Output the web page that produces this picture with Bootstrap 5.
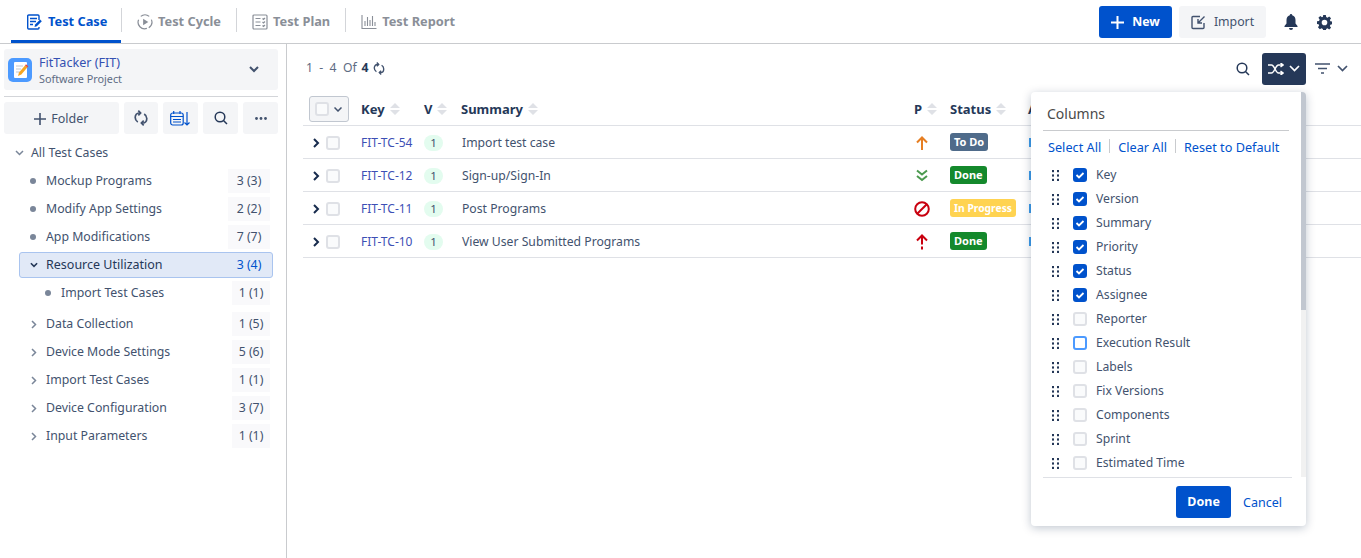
<!DOCTYPE html>
<html lang="en">
<head>
  <meta charset="UTF-8" />
  <meta name="viewport" content="width=device-width, initial-scale=1.0" />
  <title>Test Case</title>
  <link href="https://cdn.jsdelivr.net/npm/bootstrap@5.3.0/dist/css/bootstrap.min.css" rel="stylesheet">
  <style>
    html, body { height: 100%; overflow: hidden; }
    body { font-family: "Noto Sans", "Open Sans", sans-serif; font-size: 12.3px; color: #42526e; background: #fff; }
    svg { display: block; flex: none; }

    .top-bar { height: 44px; border-bottom: 1px solid #c9cbce; padding-left: 11px; padding-right: 29px; }
    .tab-item { height: 43px; padding: 0 15px; gap: 5px; font-weight: 700; font-size: 12.8px; color: #8a8f98; white-space: nowrap; }
    .tab-item.active { color: #0052cc; border-bottom: 3px solid #0052cc; padding: 3px 0 0 16px; width: 110px; gap: 6px; }
    .tab-sep { width: 1px; height: 24px; background: #d3d5d9; margin-top: -4px; }
    .btn-new { width: 73px; height: 32px; background: #0052cc; color: #fff; font-weight: 700; font-size: 12.3px; border-radius: 3px; gap: 8px; }
    .btn-import { width: 87px; height: 32px; background: #f4f5f7; color: #42526e; font-size: 12.3px; border-radius: 3px; gap: 8px; margin-left: 7px; }
    .bell-icon { margin-left: 18px; }
    .gear-icon { margin-left: 19px; }

    .page-body { height: 514px; }
    .side-panel { width: 287px; flex: none; border-right: 1px solid #c9cbce; padding: 5px 8px 0 4px; }
    .project-box { height: 41px; background: #f4f5f7; border-radius: 3px; padding: 0 19px 0 4px; gap: 7px; }
    .project-logo { width: 24px; height: 24px; border-radius: 5px; background: #4c9aff; }
    .project-text { padding-top: 2px; }
    .project-name { color: #3451b2; font-size: 12.6px; line-height: 17px; }
    .project-type { color: #5e6c84; font-size: 10.8px; line-height: 16px; }
    .side-rule { border-top: 1px solid #d3d5d9; margin: 6px 0 5px; }
    .tool-row { gap: 5px; }
    .tool-btn { height: 32px; width: 35px; background: #f4f5f7; border-radius: 3px; color: #42526e; }
    .folder-btn { width: 115px; gap: 5px; font-size: 12.5px; padding-top: 2px; }
    .tree-row { height: 28px; color: #42526e; font-size: 12.3px; }
    .tree-row .tree-label { flex: 1; }
    .tree-dot { width: 6px; height: 6px; border-radius: 50%; background: #7a8699; flex: none; }
    .tree-count { width: 42px; height: 24px; background: #f9f9fb; color: #42526e; text-align: center; line-height: 24px; margin-right: 8px; }
    .tree-count.short { width: 38px; }
    .tree-top { padding-left: 11px; gap: 7px; margin-top: 5px; }
    .tree-leaf { padding-left: 26px; gap: 10px; }
    .tree-sub { padding-left: 41px; gap: 10px; }
    .tree-branch { padding-left: 27px; gap: 9px; }
    .tree-active { margin: 1px 0 1px 15px; width: 254px; height: 26px; padding-left: 10px; gap: 8px; background: #e1e9f7; border: 1px solid #a9c4ef; border-radius: 3px; color: #253858; font-size: 12.5px; }
    .tree-active .tree-count { background: transparent; color: #0052cc; font-size: 12.3px; height: 22px; line-height: 22px; margin-right: 2px; }

    .main-panel { flex: 1; min-width: 0; padding: 0 0 0 16px; }
    .page-line { height: 49px; font-size: 12.2px; color: #5e6c84; padding: 0 13px 0 3px; }
    .page-line b { color: #253858; margin: 0 4px 0 5px; }
    .col-toggle { width: 44px; height: 32px; background: #253858; border-radius: 3px; gap: 5px; margin: 0 9px 0 12px; }
    .filter-caret { margin-left: 7px; }

    .case-table { table-layout: fixed; width: 1058px; margin: 0; }
    .case-table th, .case-table td { padding: 0; border-bottom: 1px solid #dfe1e6; vertical-align: middle; box-shadow: none; background: transparent; }
    .case-table th { height: 32px; padding-top: 1px; color: #253858; font-size: 13px; font-weight: 700; }
    .case-table td { height: 33px; padding-top: 2px; color: #42526e; font-size: 12.2px; }
    .case-table td.text-cell { padding-top: 4px; }
    .case-table td.summary-cell { padding-left: 1px; }
    .head-cell { gap: 5px; }
    .select-box { width: 40px; height: 26px; margin-left: 6px; border: 1px solid #c1c7d0; border-radius: 3px; background: #f4f5f7; gap: 5px; padding-left: 5px; }
    .check-box { width: 14px; height: 14px; border: 2px solid #dfe1e6; border-radius: 3px; background: #fafbfc; flex: none; }
    .row-lead { padding-left: 10px; gap: 6px; }
    .key-link { color: #3d4fb5; text-decoration: none; font-size: 12px; }
    .ver-pill { display: block; width: 19px; height: 16px; line-height: 16px; text-align: center; border-radius: 8px; background: #e3fcef; color: #42526e; font-size: 11.5px; }
    .prio-icon { margin-left: 2px; }
    .status-tag { display: inline-block; height: 18px; line-height: 18px; padding: 0 4px; border-radius: 3px; color: #fff; font-weight: 700; font-size: 11px; }
    .tag-todo { background: #4f6b8a; }
    .tag-done { background: #14892c; }
    .tag-prog { background: #ffd351; font-size: 10.3px; }
    .assignee-stub { display: block; width: 3px; height: 9px; margin-left: 1px; background: #3d9be9; }

    .columns-menu { position: absolute; left: 1031px; top: 92px; width: 275px; height: 434px; background: #fff; border-radius: 4px; box-shadow: 0 2px 10px rgba(9, 30, 66, .25); overflow: hidden; }
    .menu-scroll { position: absolute; right: 0; top: 0; width: 5px; height: 385px; background: #f1f1f1; }
    .menu-thumb { width: 5px; height: 218px; background: #c1c7d0; }
    .menu-title { padding: 12px 0 0 16px; height: 38px; font-size: 14px; color: #4a4a4a; line-height: 20px; }
    .menu-rule { border-top: 1px solid #c9cbce; margin: 0 17px 0 12px; }
    .menu-links { padding: 7px 0 0 17px; height: 32px; gap: 8px; }
    .menu-links a { color: #0052cc; text-decoration: none; font-size: 12.7px; line-height: 18px; }
    .menu-links i { display: block; width: 1px; height: 14px; margin-top: 1px; background: #c9cbce; }
    .col-item { height: 24px; padding-left: 21px; color: #42526e; font-size: 12.2px; }
    .col-item span:last-child { margin-left: 9px; }
    .col-list { height: 314px; overflow: hidden; }
    .col-check { width: 14px; height: 14px; margin-left: 14px; border-radius: 3px; background: #fafbfc; border: 2px solid #dfe1e6; flex: none; }
    .col-check.on { background: #0052cc; border-color: #0052cc; }
    .col-check.focus { background: #fff; border-color: #4c9aff; }
    .menu-foot { border-top: 1px solid #dfe1e6; margin: 0 14px 0 12px; padding: 8px 10px 0 0; gap: 12px; }
    .btn-done { width: 55px; height: 32px; background: #0052cc; color: #fff; font-weight: 700; border-radius: 3px; font-size: 12.5px; padding-top: 1px; }
    .link-cancel { color: #0052cc; font-size: 12.5px; text-decoration: none; padding-top: 2px; }
  </style>
</head>
<body>
  <div class="top-bar d-flex align-items-start">
    <div class="tab-item active d-flex align-items-center">
      <svg width="15" height="16" viewBox="0 0 15 16" fill="none" stroke="#0052cc" stroke-width="1.400"><path d="M12 6V2a1 1 0 0 0-1-1H1.700a1 1 0 0 0-1 1v12a1 1 0 0 0 1 1H11a1 1 0 0 0 1-1v-1"/><path d="M3 4.500h7M3 7.500h6M3 10.500h3"/><path d="M7.500 13l.6-2.400 5-5 1.700 1.700-5 5z" fill="#0052cc" stroke="none"/></svg>
      Test Case
    </div>
    <div class="d-flex align-items-center" style="height:43px"><span class="tab-sep"></span></div>
    <div class="tab-item d-flex align-items-center">
      <svg width="16" height="16" viewBox="0 0 17 17" fill="none" stroke="#8a8f98" stroke-width="1.300"><path d="M4 2.500A7 7 0 0 1 13 2.500M15.300 6a7 7 0 0 1-2.800 8.500M10.500 15.300A7 7 0 0 1 1.700 6"/><path d="M6.500 5l5.500 3.500-5.500 3.500z" fill="#8a8f98" stroke="none"/></svg>
      Test Cycle
    </div>
    <div class="d-flex align-items-center" style="height:43px"><span class="tab-sep"></span></div>
    <div class="tab-item d-flex align-items-center">
      <svg width="16" height="16" viewBox="0 0 16 16" fill="none" stroke="#8a8f98" stroke-width="1.200"><rect x="1" y="1" width="14" height="14" rx="1"/><path d="M3.500 4.500h5M3.500 8h5M3.500 11.500h5M10.500 4.500l1 1 1.500-1.500M10.500 8l1 1 1.500-1.500M10.500 11.500l1 1 1.500-1.500"/></svg>
      Test Plan
    </div>
    <div class="d-flex align-items-center" style="height:43px"><span class="tab-sep"></span></div>
    <div class="tab-item d-flex align-items-center">
      <svg width="16" height="15" viewBox="0 0 15 15" fill="none" stroke="#8a8f98" stroke-width="1.100"><path d="M.5 1v13.500H15M3.500 12V7M6 12V3M8.500 12V6M11 12V2M13.500 12V8"/></svg>
      Test Report
    </div>
    <div class="ms-auto d-flex align-items-center" style="height:32px;margin-top:6px">
      <div class="btn-new d-flex align-items-center justify-content-center">
        <svg width="13" height="13" viewBox="0 0 13 13" stroke="#fff" stroke-width="2"><path d="M6.500 0v13M0 6.500h13"/></svg>
        New
      </div>
      <div class="btn-import d-flex align-items-center justify-content-center">
        <svg width="15" height="15" viewBox="0 0 15 15" fill="none" stroke="#42526e" stroke-width="1.400"><path d="M9 1.500H2a1 1 0 0 0-1 1v10a1 1 0 0 0 1 1h10a1 1 0 0 0 1-1V8"/><path d="M13.500 1.500L7.500 7.500M7 4v4h4" /></svg>
        Import
      </div>
      <svg class="bell-icon" width="14" height="16" viewBox="0 0 14 16" fill="#253858"><path d="M7 0a1.200 1.200 0 0 1 1.200 1.300C10.500 2 11.500 3.800 11.500 6v3.500L13.500 12v1H.5v-1l2-2.500V6c0-2.200 1-4 3.300-4.700A1.200 1.200 0 0 1 7 0zM5 14h4a2 2 0 0 1-4 0z"/></svg>
      <svg class="gear-icon" width="15" height="15" viewBox="0 0 16 16" fill="#253858"><path fill-rule="evenodd" d="M6.600 0h2.800l.4 2.200 1.400.6L13 1.500l2 2-1.300 1.800.6 1.400 2.200.4v2.800l-2.200.4-.6 1.400 1.300 1.800-2 2-1.800-1.300-1.400.6-.4 2.200H6.600l-.4-2.200-1.400-.6L3 15.100l-2-2 1.300-1.800-.6-1.400L0 9.500V6.700l2.200-.4.6-1.400L1.500 3l2-2 1.800 1.300 1-.4zM8 5a3 3 0 1 0 0 6 3 3 0 0 0 0-6z"/></svg>
    </div>
  </div>

  <div class="page-body d-flex">
    <aside class="side-panel">
      <div class="project-box d-flex align-items-center">
        <div class="project-logo d-flex align-items-center justify-content-center">
          <svg width="17" height="18" viewBox="0 0 17 18"><rect x="2" y="1" width="13" height="16" rx="1" fill="#fff"/><path d="M4 5h7M4 8h5M4 11h4" stroke="#c1c7d0"/><path d="M6 15l1-3.500 6-7 2.300 2-6 7z" fill="#f5a623"/><path d="M13 4.500l1-1.200 2.300 2-1 1.200z" fill="#e5493a"/></svg>
        </div>
        <div class="project-text flex-grow-1">
          <div class="project-name">FitTacker (FIT)</div>
          <div class="project-type">Software Project</div>
        </div>
        <svg width="10" height="7" viewBox="0 0 10 7" fill="none" stroke="#42526e" stroke-width="2"><path d="M1 1l4 4 4-4"/></svg>
      </div>
      <div class="side-rule"></div>
      <div class="tool-row d-flex">
        <div class="tool-btn folder-btn d-flex align-items-center justify-content-center">
          <svg width="12" height="12" viewBox="0 0 12 12" stroke="#42526e" stroke-width="1.600"><path d="M6 0v12M0 6h12"/></svg>
          Folder
        </div>
        <div class="tool-btn d-flex align-items-center justify-content-center">
          <svg width="14" height="16" viewBox="0 0 14 16" fill="none" stroke="#42526e" stroke-width="1.700"><path d="M6.500 3H5C2.800 3 1.200 5 1.200 7.500c0 2 1 3.500 2.600 4.500"/><path d="M4.300.7L6.600 3 4.300 5.300"/><path d="M7.500 13H9c2.200 0 3.800-2 3.800-4.500 0-2-1-3.500-2.600-4.500"/><path d="M9.700 10.700L7.400 13l2.300 2.300"/></svg>
        </div>
        <div class="tool-btn d-flex align-items-center justify-content-center">
          <svg width="21" height="15" viewBox="0 0 21 15" fill="none" stroke="#0052cc" stroke-width="1.200"><rect x=".7" y="2" width="12.500" height="12" rx="2"/><path d="M.7 5.500h12.500M3.700 0v3M10 0v3M3 8.500h8M3 11h8" /><path d="M17 1v13M14.500 11.500L17 14l2.500-2.500"/></svg>
        </div>
        <div class="tool-btn d-flex align-items-center justify-content-center">
          <svg width="14" height="14" viewBox="0 0 14 14" fill="none" stroke="#253858" stroke-width="1.500"><circle cx="6" cy="6" r="4.800"/><path d="M9.500 9.500L13 13"/></svg>
        </div>
        <div class="tool-btn d-flex align-items-center justify-content-center">
          <svg width="12" height="3" viewBox="0 0 12 3" fill="#42526e"><circle cx="1.500" cy="1.500" r="1.400"/><circle cx="6" cy="1.500" r="1.400"/><circle cx="10.500" cy="1.500" r="1.400"/></svg>
        </div>
      </div>

      <div class="tree-row tree-top d-flex align-items-center">
        <svg width="9" height="6" viewBox="0 0 9 6" fill="none" stroke="#7a8699" stroke-width="1.500"><path d="M1 1l3.500 3.500L8 1"/></svg>
        <span class="tree-label">All Test Cases</span>
      </div>
      <div class="tree-row tree-leaf d-flex align-items-center"><span class="tree-dot"></span><span class="tree-label">Mockup Programs</span><span class="tree-count">3 (3)</span></div>
      <div class="tree-row tree-leaf d-flex align-items-center"><span class="tree-dot"></span><span class="tree-label">Modify App Settings</span><span class="tree-count">2 (2)</span></div>
      <div class="tree-row tree-leaf d-flex align-items-center"><span class="tree-dot"></span><span class="tree-label">App Modifications</span><span class="tree-count">7 (7)</span></div>
      <div class="tree-active d-flex align-items-center">
        <svg width="8" height="6" viewBox="0 0 9 6" fill="none" stroke="#253858" stroke-width="1.800"><path d="M1 1l3.500 3.500L8 1"/></svg>
        <span class="tree-label flex-grow-1">Resource Utilization</span><span class="tree-count">3 (4)</span>
      </div>
      <div class="tree-row tree-sub d-flex align-items-center"><span class="tree-dot"></span><span class="tree-label">Import Test Cases</span><span class="tree-count short">1 (1)</span></div>
      <div style="height:3px"></div>
      <div class="tree-row tree-branch d-flex align-items-center"><svg width="6" height="9" viewBox="0 0 6 9" fill="none" stroke="#7a8699" stroke-width="1.500"><path d="M1 1l3.500 3.500L1 8"/></svg><span class="tree-label">Data Collection</span><span class="tree-count short">1 (5)</span></div>
      <div class="tree-row tree-branch d-flex align-items-center"><svg width="6" height="9" viewBox="0 0 6 9" fill="none" stroke="#7a8699" stroke-width="1.500"><path d="M1 1l3.500 3.500L1 8"/></svg><span class="tree-label">Device Mode Settings</span><span class="tree-count short">5 (6)</span></div>
      <div class="tree-row tree-branch d-flex align-items-center"><svg width="6" height="9" viewBox="0 0 6 9" fill="none" stroke="#7a8699" stroke-width="1.500"><path d="M1 1l3.500 3.500L1 8"/></svg><span class="tree-label">Import Test Cases</span><span class="tree-count short">1 (1)</span></div>
      <div class="tree-row tree-branch d-flex align-items-center"><svg width="6" height="9" viewBox="0 0 6 9" fill="none" stroke="#7a8699" stroke-width="1.500"><path d="M1 1l3.500 3.500L1 8"/></svg><span class="tree-label">Device Configuration</span><span class="tree-count short">3 (7)</span></div>
      <div class="tree-row tree-branch d-flex align-items-center"><svg width="6" height="9" viewBox="0 0 6 9" fill="none" stroke="#7a8699" stroke-width="1.500"><path d="M1 1l3.500 3.500L1 8"/></svg><span class="tree-label">Input Parameters</span><span class="tree-count short">1 (1)</span></div>
    </aside>

    <main class="main-panel">
      <div class="page-line d-flex align-items-center">
        <span>1&nbsp; - &nbsp;4&nbsp; Of</span><b>4</b>
        <svg width="12" height="13" viewBox="0 0 14 16" fill="none" stroke="#42526e" stroke-width="1.700"><path d="M6.500 3H5C2.800 3 1.200 5 1.200 7.500c0 2 1 3.500 2.600 4.500"/><path d="M4.300.7L6.600 3 4.300 5.300"/><path d="M7.500 13H9c2.200 0 3.800-2 3.800-4.500 0-2-1-3.500-2.600-4.500"/><path d="M9.700 10.700L7.400 13l2.300 2.300"/></svg>
        <svg class="ms-auto" width="14" height="14" viewBox="0 0 14 14" fill="none" stroke="#253858" stroke-width="1.500"><circle cx="6" cy="6" r="4.800"/><path d="M9.500 9.500L13 13"/></svg>
        <div class="col-toggle d-flex align-items-center justify-content-center">
          <svg width="16" height="12" viewBox="0 0 16 12" fill="none" stroke="#fff" stroke-width="1.500"><path d="M0 2h3.500c3 0 4 8 7 8H15M0 10h3.500c3 0 4-8 7-8H15M12.500 0l2.700 2-2.700 2M12.500 8l2.700 2-2.700 2"/></svg>
          <svg width="11" height="7" viewBox="0 0 11 7" fill="none" stroke="#fff" stroke-width="1.700"><path d="M1 1l4.500 4.500L10 1"/></svg>
        </div>
        <svg width="15" height="11" viewBox="0 0 15 11" fill="none" stroke="#42526e" stroke-width="1.300"><path d="M0 1h15M3 5.500h9M6 10h3"/></svg>
        <svg class="filter-caret" width="11" height="7" viewBox="0 0 11 7" fill="none" stroke="#42526e" stroke-width="1.700"><path d="M1 1l4.500 4.500L10 1"/></svg>
      </div>

      <table class="table case-table">
        <colgroup><col style="width:58px"><col style="width:63px"><col style="width:37px"><col style="width:453px"><col style="width:36px"><col style="width:78px"><col></colgroup>
        <thead>
          <tr>
            <th><div class="select-box d-flex align-items-center"><span class="check-box"></span><svg width="8" height="5" viewBox="0 0 8 5" fill="none" stroke="#42526e" stroke-width="1.500"><path d="M.5.5L4 4 7.500.5"/></svg></div></th>
            <th><div class="head-cell d-flex align-items-center">Key<svg width="10" height="12" viewBox="0 0 10 12" fill="#dfe1e6"><path d="M5 0l5 5H0zM5 12l5-5H0z"/></svg></div></th>
            <th><div class="head-cell d-flex align-items-center">V<svg width="10" height="12" viewBox="0 0 10 12" fill="#dfe1e6"><path d="M5 0l5 5H0zM5 12l5-5H0z"/></svg></div></th>
            <th><div class="head-cell d-flex align-items-center">Summary<svg width="10" height="12" viewBox="0 0 10 12" fill="#dfe1e6"><path d="M5 0l5 5H0zM5 12l5-5H0z"/></svg></div></th>
            <th><div class="head-cell d-flex align-items-center">P<svg width="10" height="12" viewBox="0 0 10 12" fill="#dfe1e6"><path d="M5 0l5 5H0zM5 12l5-5H0z"/></svg></div></th>
            <th><div class="head-cell d-flex align-items-center">Status<svg width="10" height="12" viewBox="0 0 10 12" fill="#dfe1e6"><path d="M5 0l5 5H0zM5 12l5-5H0z"/></svg></div></th>
            <th>A</th>
          </tr>
        </thead>
        <tbody>
          <tr>
            <td><div class="row-lead d-flex align-items-center"><svg width="7" height="10" viewBox="0 0 7 10" fill="none" stroke="#172b4d" stroke-width="2"><path d="M1 1l4 4-4 4"/></svg><span class="check-box"></span></div></td>
            <td class="text-cell"><a class="key-link" href="#">FIT-TC-54</a></td>
            <td><span class="ver-pill">1</span></td>
            <td class="text-cell summary-cell">Import test case</td>
            <td><svg class="prio-icon" width="12" height="14" viewBox="0 0 12 14" fill="none" stroke="#e67e22" stroke-width="2"><path d="M6 14V2M1 6.500L6 1.500l5 5"/></svg></td>
            <td><span class="status-tag tag-todo">To Do</span></td>
            <td><span class="assignee-stub"></span></td>
          </tr>
          <tr>
            <td><div class="row-lead d-flex align-items-center"><svg width="7" height="10" viewBox="0 0 7 10" fill="none" stroke="#172b4d" stroke-width="2"><path d="M1 1l4 4-4 4"/></svg><span class="check-box"></span></div></td>
            <td class="text-cell"><a class="key-link" href="#">FIT-TC-12</a></td>
            <td><span class="ver-pill">1</span></td>
            <td class="text-cell summary-cell">Sign-up/Sign-In</td>
            <td><svg class="prio-icon" width="12" height="13" viewBox="0 0 12 13" fill="none" stroke="#4b9a4f" stroke-width="2"><path d="M1 1.500l5 4 5-4M1 7l5 4 5-4"/></svg></td>
            <td><span class="status-tag tag-done">Done</span></td>
            <td><span class="assignee-stub"></span></td>
          </tr>
          <tr>
            <td><div class="row-lead d-flex align-items-center"><svg width="7" height="10" viewBox="0 0 7 10" fill="none" stroke="#172b4d" stroke-width="2"><path d="M1 1l4 4-4 4"/></svg><span class="check-box"></span></div></td>
            <td class="text-cell"><a class="key-link" href="#">FIT-TC-11</a></td>
            <td><span class="ver-pill">1</span></td>
            <td class="text-cell summary-cell">Post Programs</td>
            <td><svg width="16" height="16" viewBox="0 0 16 16" fill="none" stroke="#c9000f" stroke-width="2"><circle cx="8" cy="8" r="6.800"/><path d="M3.200 12.800L12.800 3.200"/></svg></td>
            <td><span class="status-tag tag-prog">In Progress</span></td>
            <td><span class="assignee-stub"></span></td>
          </tr>
          <tr>
            <td><div class="row-lead d-flex align-items-center"><svg width="7" height="10" viewBox="0 0 7 10" fill="none" stroke="#172b4d" stroke-width="2"><path d="M1 1l4 4-4 4"/></svg><span class="check-box"></span></div></td>
            <td class="text-cell"><a class="key-link" href="#">FIT-TC-10</a></td>
            <td><span class="ver-pill">1</span></td>
            <td class="text-cell summary-cell">View User Submitted Programs</td>
            <td><svg class="prio-icon" width="12" height="16" viewBox="0 0 12 16" fill="none" stroke="#c9000f" stroke-width="2"><path d="M6 10.500V2M1 6.500L6 1.500l5 5M6 12.500v3"/></svg></td>
            <td><span class="status-tag tag-done">Done</span></td>
            <td><span class="assignee-stub"></span></td>
          </tr>
        </tbody>
      </table>
    </main>
  </div>

  <div class="columns-menu">
    <div class="menu-scroll"><div class="menu-thumb"></div></div>
    <div class="menu-title">Columns</div>
    <div class="menu-rule"></div>
    <div class="menu-links d-flex align-items-start">
      <a href="#">Select All</a><i></i><a href="#">Clear All</a><i></i><a href="#">Reset to Default</a>
    </div>
    <div class="col-list" id="col-list"></div>
    <div class="menu-foot d-flex align-items-center justify-content-end">
      <div class="btn-done d-flex align-items-center justify-content-center">Done</div>
      <a class="link-cancel" href="#">Cancel</a>
    </div>
  </div>

  <script src="https://cdn.jsdelivr.net/npm/bootstrap@5.3.0/dist/js/bootstrap.bundle.min.js"></script>
  <script>
    const cols = [['Key',1],['Version',1],['Summary',1],['Priority',1],['Status',1],['Assignee',1],['Reporter',0],['Execution Result',2],['Labels',0],['Fix Versions',0],['Components',0],['Sprint',0],['Estimated Time',0]];
    const grip = '<svg width="7" height="11" viewBox="0 0 7 11" fill="#253858"><rect width="2" height="2.200"/><rect x="5" width="2" height="2.200"/><rect y="4.400" width="2" height="2.200"/><rect x="5" y="4.400" width="2" height="2.200"/><rect y="8.800" width="2" height="2.200"/><rect x="5" y="8.800" width="2" height="2.200"/></svg>';
    const tick = '<svg width="10" height="10" viewBox="0 0 10 10" fill="none" stroke="#fff" stroke-width="1.800"><path d="M1.500 5l2.500 2.500 4.500-4.500"/></svg>';
    document.getElementById('col-list').innerHTML = cols.map(c => {
      const cls = c[1] === 1 ? 'on' : c[1] === 2 ? 'focus' : '';
      return `<div class="col-item d-flex align-items-center">${grip}<span class="col-check ${cls} d-flex align-items-center justify-content-center">${c[1] === 1 ? tick : ''}</span><span>${c[0]}</span></div>`;
    }).join('');
  </script>
</body>
</html>
